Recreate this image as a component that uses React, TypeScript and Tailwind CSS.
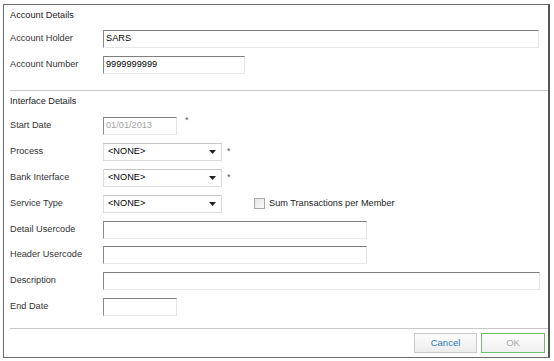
import React from 'react';

// --- small building blocks ---
const Label = ({ children }: { children: React.ReactNode }) => (
  <div className="w-[93px] shrink-0 text-[#333]">{children}</div>
);

const TextBox = ({ w, value, disabled }: { w: string; value?: string; disabled?: boolean }) => (
  <div
    className={`${w} h-[18px] flex items-center pl-[2px] border border-t-[#7d7d7d] border-l-[#8a8a8a] border-r-[#e4e4e4] border-b-[#e8e8e8] bg-white ${
      disabled ? 'text-[#a0a0a0]' : 'text-black'
    }`}
  >
    {value}
  </div>
);

const Star = () => <span className="self-start mt-[2px] text-[9px] text-[#555] leading-none">*</span>;

const Dropdown = () => (
  <div className="w-[119px] h-[18px] flex items-center justify-between pl-[4px] pr-[5px] border border-[#dcdcdc] border-t-[#c4c4c4] bg-white text-black">
    <span>&lt;NONE&gt;</span>
    <svg width="7" height="4" viewBox="0 0 7 4">
      <path d="M0 0 H7 L3.5 4 Z" fill="#222" />
    </svg>
  </div>
);

const Row = ({ children, h = 'h-[26px]' }: { children: React.ReactNode; h?: string }) => (
  <div className={`${h} flex items-center`}>{children}</div>
);

export default function App() {
  return (
    <div className="w-[554px] h-[361px] bg-white pt-[4px] pl-[3px]" style={{ fontFamily: '"Liberation Sans", Arial, sans-serif' }}>
      <div className="w-[547px] h-[354px] border border-[#6b6b6b] border-r-2 border-r-[#555] text-[9.2px] flex flex-col">
        {/* Account Details */}
        <div className="pl-[6px]">
          <div className="h-[21px] flex items-center pt-[1px] text-[#222]">Account Details</div>
          <Row>
            <Label>Account Holder</Label>
            <TextBox w="w-[436px]" value="SARS" />
          </Row>
          <Row>
            <Label>Account Number</Label>
            <TextBox w="w-[142px]" value="9999999999" />
          </Row>
        </div>

        <div className="ml-[6px] mt-[12px] border-t border-[#c8c8c8]" />

        {/* Interface Details */}
        <div className="pl-[6px]">
          <div className="h-[22px] flex items-center text-[#222]">Interface Details</div>
          <Row>
            <Label>Start Date</Label>
            <TextBox w="w-[74px]" value="01/01/2013" disabled />
            <span className="ml-[8px] self-start mt-[3px] text-[9px] text-[#555] leading-none">*</span>
          </Row>
          <Row>
            <Label>Process</Label>
            <Dropdown />
            <span className="ml-[5px]"><Star /></span>
          </Row>
          <Row>
            <Label>Bank Interface</Label>
            <Dropdown />
            <span className="ml-[5px]"><Star /></span>
          </Row>
          <Row>
            <Label>Service Type</Label>
            <Dropdown />
            <div className="ml-[32px] flex items-center gap-[4px] text-[#222]">
              <div className="w-[11px] h-[11px] border border-[#a9a9a9] bg-gradient-to-br from-[#e8e8e8] to-[#fafafa]" />
              <span>Sum Transactions per Member</span>
            </div>
          </Row>
          <Row h="h-[25px]">
            <Label>Detail Usercode</Label>
            <TextBox w="w-[264px]" />
          </Row>
          <Row>
            <Label>Header Usercode</Label>
            <TextBox w="w-[264px]" />
          </Row>
          <Row>
            <Label>Description</Label>
            <TextBox w="w-[437px]" />
          </Row>
          <Row>
            <Label>End Date</Label>
            <TextBox w="w-[74px]" />
          </Row>
        </div>

        <div className="ml-[6px] mt-[8px] border-t border-[#c8c8c8]" />

        {/* Buttons */}
        <div className="flex justify-end gap-[4px] pr-[3px] pt-[4px]">
          <button className="w-[63px] h-[20px] border border-[#c9c9c9] bg-gradient-to-b from-[#fdfdfd] to-[#ececec] text-[#2f7bb6] text-[9.5px]">
            Cancel
          </button>
          <button className="w-[64px] h-[20px] border border-[#6cbf6c] bg-gradient-to-b from-[#fdfdfd] to-[#f0f0f0] text-[#a8a8a8] text-[9.5px]">
            OK
          </button>
        </div>
      </div>
    </div>
  );
}
